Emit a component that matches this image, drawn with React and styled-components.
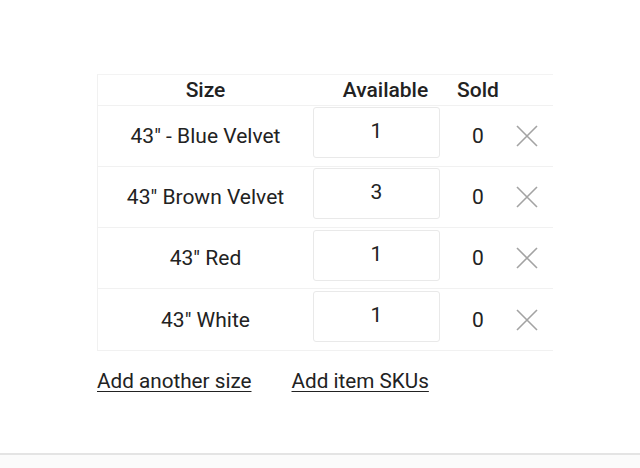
import React from "react"
import styled, { createGlobalStyle } from "styled-components"

const GlobalStyle = createGlobalStyle`
  html, body {
    margin: 0;
    padding: 0;
    background: #fff;
    font-family: Roboto, "Liberation Sans", sans-serif;
    color: #222;
  }
`

const Page = styled.div`
  height: 468px;
  display: flex;
  flex-direction: column;
`

const Content = styled.div`
  flex: 1;
  padding: 74px 0 0 97px;
`

const Table = styled.div`
  width: 456px;
  border-top: 1px solid #f3f3f3;
  border-left: 1px solid #f1f1f1;
  border-bottom: 1px solid #f1f1f1;
  box-sizing: border-box;
`

const Row = styled.div`
  display: grid;
  grid-template-columns: 215px 127px 76px 37px;
  height: ${(p) => (p.$header ? 31 : 61)}px;
  border-bottom: ${(p) => (p.$last ? "none" : "1px solid #f1f1f1")};
  box-sizing: border-box;
`

const HeadCell = styled.div`
  display: flex;
  align-items: center;
  justify-content: center;
  font-size: 21px;
  font-weight: 500;
  padding-left: ${(p) => p.$shift || 0}px;
  white-space: nowrap;
`

const Cell = styled.div`
  display: flex;
  align-items: center;
  justify-content: center;
  font-size: 21px;
  white-space: nowrap;
`

const QtyCell = styled.div`
  padding-top: ${(p) => p.$top}px;
`

const QtyBox = styled.div`
  height: 51px;
  border: 1px solid #e9e9e9;
  border-radius: 3px;
  box-sizing: border-box;
  display: flex;
  align-items: center;
  justify-content: center;
  font-size: 21px;
  padding-bottom: 4px;
`

const RemoveCell = styled.div`
  display: flex;
  align-items: center;
`

const Links = styled.div`
  display: flex;
  gap: 40px;
  margin-top: 18px;
`

const TextLink = styled.a`
  font-size: 20.7px;
  color: #222;
  text-decoration: underline;
  text-underline-offset: 3px;
  text-decoration-thickness: 1px;
  cursor: pointer;
`

const Footer = styled.div`
  height: 13px;
  border-top: 2px solid #e4e4e4;
  background: #fbfbfb;
`

const CloseIcon = () => (
  <svg width="22" height="22" viewBox="0 0 22 22">
    <path d="M1 1 L21 21 M21 1 L1 21" stroke="#a3a3a3" strokeWidth="1.6" fill="none" />
  </svg>
)

const rows = [
  { name: '43" - Blue Velvet', available: 1, sold: 0, top: 1 },
  { name: '43" Brown Velvet', available: 3, sold: 0, top: 1 },
  { name: '43" Red', available: 1, sold: 0, top: 2 },
  { name: '43" White', available: 1, sold: 0, top: 2 },
]

export default function App() {
  return (
    <Page>
      <GlobalStyle />
      <Content>
        <Table>
          <Row $header>
            <HeadCell>Size</HeadCell>
            <HeadCell $shift={18}>Available</HeadCell>
            <HeadCell>Sold</HeadCell>
            <div />
          </Row>
          {rows.map((r, i) => (
            <Row key={r.name} $last={i === rows.length - 1}>
              <Cell>{r.name}</Cell>
              <QtyCell $top={r.top}>
                <QtyBox>{r.available}</QtyBox>
              </QtyCell>
              <Cell>{r.sold}</Cell>
              <RemoveCell>
                <CloseIcon />
              </RemoveCell>
            </Row>
          ))}
        </Table>
        <Links>
          <TextLink>Add another size</TextLink>
          <TextLink>Add item SKUs</TextLink>
        </Links>
      </Content>
      <Footer />
    </Page>
  )
}
